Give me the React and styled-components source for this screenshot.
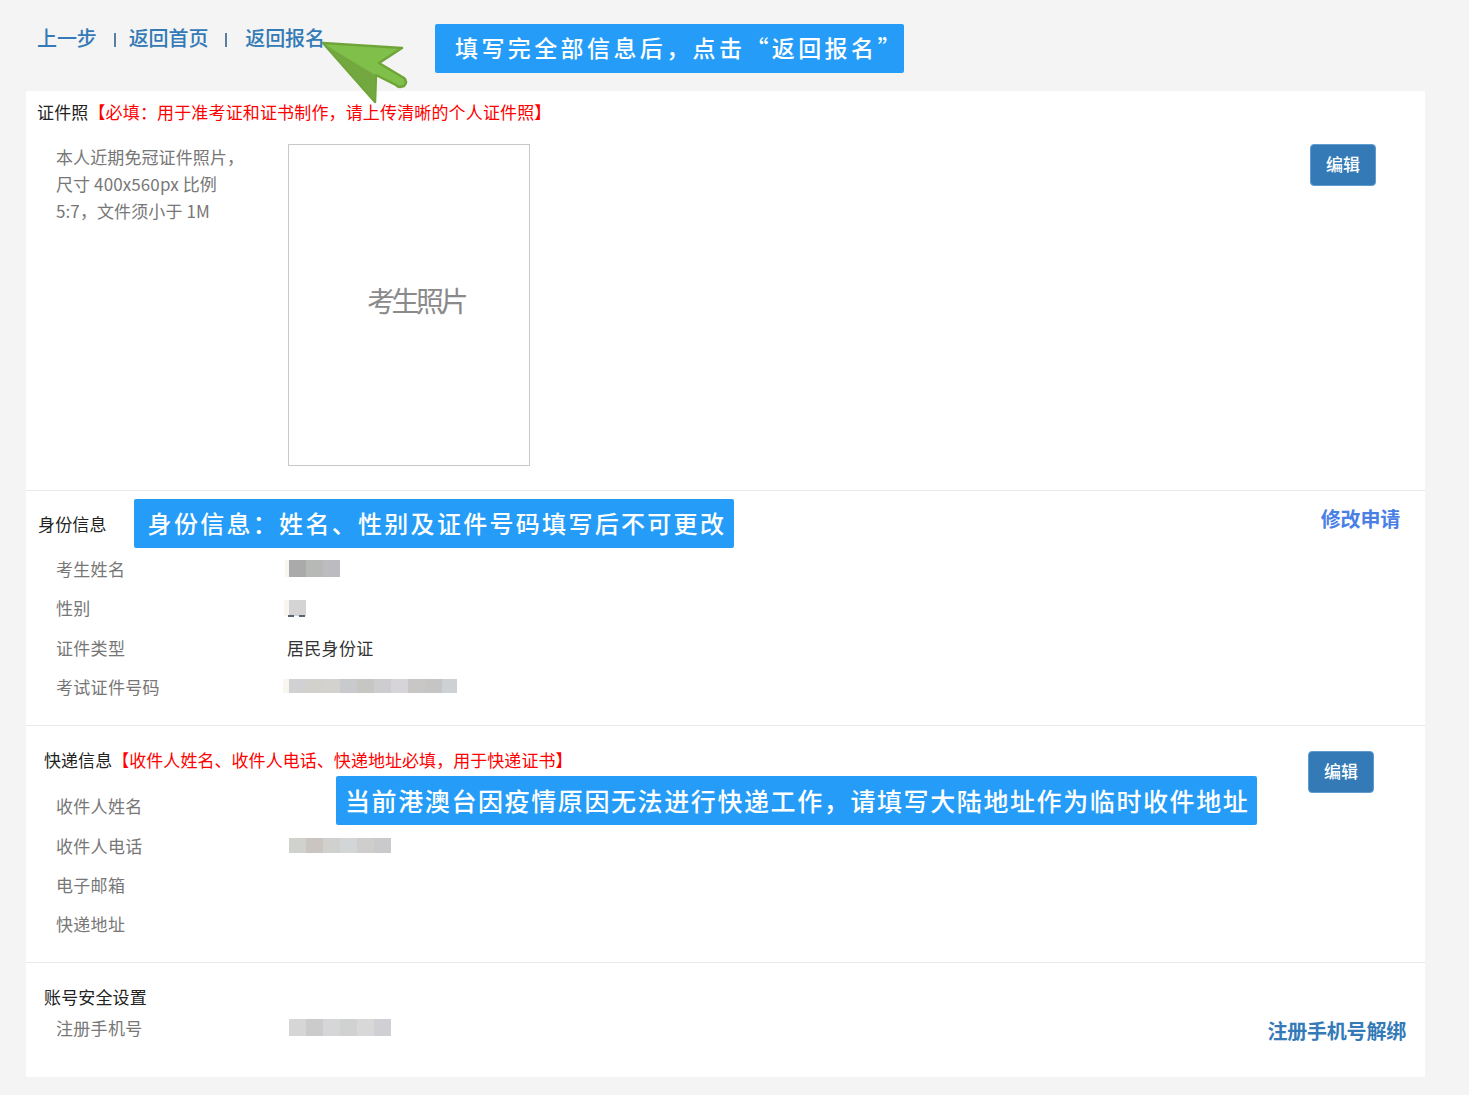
import * as React from "react";
import styled, { createGlobalStyle } from "styled-components";

const GlobalStyle = createGlobalStyle`
  html, body {
    margin: 0;
    padding: 0;
    background: #f4f4f4;
  }
  body {
    font-family: "Noto Sans CJK SC", "Liberation Sans", sans-serif;
    color: #333;
  }
`;

const Page = styled.div`
  position: relative;
  width: 1469px;
  height: 1095px;
  overflow: hidden;
  padding: 0 44px 0 26px;
  box-sizing: border-box;
`;

const TopBar = styled.div`
  height: 91px;
  display: flex;
  align-items: flex-start;
  padding: 24px 0 0 11px;
  box-sizing: border-box;
`;

const Nav = styled.nav`
  display: flex;
  align-items: center;
  height: 28px;
  width: 398px;
  flex: none;
`;

const NavLink = styled.a`
  font-size: 20px;
  font-weight: 500;
  line-height: 28px;
  color: #337ab7;
  letter-spacing: -0.1px;
`;

const NavSep = styled.span`
  width: 2px;
  height: 14px;
  margin: 4px ${(p) => p.$right}px 0 ${(p) => p.$left}px;
  background: #5b7f9c;
`;

const Callout = styled.div`
  background: #259df8;
  color: #fff;
  height: 49px;
  line-height: 47px;
  border-radius: 2px;
  white-space: nowrap;
  box-sizing: border-box;
  font-weight: 500;
  font-size: ${(p) => p.$size}px;
  letter-spacing: ${(p) => p.$spacing}px;
  padding: 0 ${(p) => p.$padRight}px 0 ${(p) => p.$pad}px;
  flex: none;
`;

const SectionCallout = styled(Callout)`
  margin-left: 27px;
`;

const FloatingCallout = styled(Callout)`
  position: absolute;
  left: 310px;
  top: 50px;
  line-height: 49px;
`;

const Arrow = styled.svg`
  position: absolute;
  left: 320px;
  top: 38px;
`;

const Card = styled.main`
  background: #fff;
  height: 986px;
`;

const Section = styled.section`
  position: relative;
  box-sizing: border-box;
  height: ${(p) => p.$height}px;
  border-bottom: ${(p) => (p.$last ? "none" : "1px solid #e8e8e8")};
  padding-top: ${(p) => p.$top}px;
`;

const SectionHead = styled.div`
  display: flex;
  align-items: center;
  height: ${(p) => p.$height}px;
  padding-left: ${(p) => p.$left}px;
  margin-bottom: ${(p) => p.$gap || 0}px;
`;

const Title = styled.h3`
  margin: 0;
  font-size: 17px;
  font-weight: 400;
  color: #222;
  white-space: nowrap;
  letter-spacing: ${(p) => p.$spacing ?? 0.15}px;
`;

const Required = styled.span`
  color: #f00;
`;

const PhotoRow = styled.div`
  display: grid;
  grid-template-columns: 262px 242px 1fr 66px;
  padding: 19px 49px 0 0;
  align-items: start;
`;

const Hint = styled.p`
  margin: -1px 0 0;
  padding-left: 30px;
  font-size: 17px;
  line-height: 27px;
  color: #777;
  white-space: nowrap;
  letter-spacing: 0.1px;
`;

const PhotoBox = styled.div`
  width: 242px;
  height: 322px;
  box-sizing: border-box;
  border: 1px solid #c8c8c8;
  display: flex;
  align-items: center;
  justify-content: center;
  padding: 0 0 11px 14px;
  font-size: 28px;
  letter-spacing: -3.6px;
  color: #8a8a8a;
`;

const EditButton = styled.button`
  width: 66px;
  height: 42px;
  padding: 0 0 3px;
  border: 1px solid #5f9ccf;
  border-radius: 4px;
  background: #337ab7;
  color: #fff;
  font-family: inherit;
  font-size: 17px;
  font-weight: 500;
`;

const FloatingEdit = styled(EditButton)`
  position: absolute;
  left: 1282px;
  top: 25px;
`;

const Row = styled.div`
  display: grid;
  grid-template-columns: 232px 1fr;
  align-items: center;
  height: ${(p) => p.$height || 39.4}px;
  padding-left: 30px;
`;

const Label = styled.span`
  font-size: 17px;
  color: #777;
  letter-spacing: 0.3px;
`;

const Value = styled.span`
  font-size: 17px;
  color: #333;
  letter-spacing: 0.3px;
  margin-left: -1px;
`;

const Blur = styled.div`
  position: relative;
  display: flex;
  height: ${(p) => p.$height}px;
  margin-left: 1px;

  &::before {
    content: "";
    width: ${(p) => p.$lead || 0}px;
    margin-left: -${(p) => p.$lead || 0}px;
    background: #f9f6ef;
  }
`;

const Cell = styled.i`
  display: block;
  width: ${(p) => p.$width}px;
  background: ${(p) => p.$color};
`;

/* bottom edge of the glyph that the blur doesn't quite cover */
const GlyphTail = styled.b`
  position: absolute;
  left: -1px;
  bottom: -1px;
  width: 17px;
  height: 2px;
  background: linear-gradient(90deg, #5a6470 0 35%, transparent 35% 65%, #5a6470 65%);
`;

const SideLink = styled.a`
  position: absolute;
  font-size: 20px;
  font-weight: 700;
  line-height: 28px;
  white-space: nowrap;
  letter-spacing: -0.2px;
  color: ${(p) => p.$color};
  right: ${(p) => p.$right}px;
  top: ${(p) => p.$top}px;
`;

const Pixels = ({ colors, height, lead, lastWidth, tail }) => (
  <Blur $height={height} $lead={lead}>
    {colors.map((c, i) => (
      <Cell key={i} $color={c} $width={lastWidth && i === colors.length - 1 ? lastWidth : 17} />
    ))}
    {tail ? <GlyphTail /> : null}
  </Blur>
);

const ArrowIcon = () => (
  <Arrow width="92" height="68" viewBox="0 0 92 68">
    <path
      d="M3 5 L82 10 L59 25 L84 40 Q88 44 84 48 L80 49 Q78 49 76 47 L56 37 L55 64 Z"
      fill="#80c04a"
      stroke="#6fa538"
      strokeWidth="2.5"
      strokeLinejoin="round"
    />
    <path d="M4 6 L55 37 L55 62 Z" fill="#72a83f" />
  </Arrow>
);

export default function App() {
  return (
    <Page>
      <GlobalStyle />
      <TopBar>
        <Nav>
          <NavLink>上一步</NavLink>
          <NavSep $left={17} $right={13} />
          <NavLink>返回首页</NavLink>
          <NavSep $left={17} $right={18} />
          <NavLink>返回报名</NavLink>
        </Nav>
        <Callout $size={23} $spacing={3.4} $pad={20} $padRight={0}>
          填写完全部信息后，点击“返回报名”
        </Callout>
      </TopBar>
      <ArrowIcon />
      <Card>
        <Section $height={400} $top={6}>
          <SectionHead $height={28} $left={11}>
            <Title>
              证件照<Required>【必填：用于准考证和证书制作，请上传清晰的个人证件照】</Required>
            </Title>
          </SectionHead>
          <PhotoRow>
            <Hint>
              本人近期免冠证件照片，
              <br />
              尺寸 400x560px 比例
              <br />
              5:7，文件须小于 1M
            </Hint>
            <PhotoBox>考生照片</PhotoBox>
            <span />
            <EditButton>编辑</EditButton>
          </PhotoRow>
        </Section>

        <Section $height={235} $top={8}>
          <SectionHead $height={49} $left={12} $gap={0.6}>
            <Title>身份信息</Title>
            <SectionCallout $size={24} $spacing={2.3} $pad={14} $padRight={8}>
              身份信息：姓名、性别及证件号码填写后不可更改
            </SectionCallout>
          </SectionHead>
          <SideLink $color="#4a7fe6" $right={25} $top={14}>
            修改申请
          </SideLink>
          <Row>
            <Label>考生姓名</Label>
            <Pixels height={17} lead={4} colors={["#a9aaa9", "#b7b9b6", "#bcbcc0"]} />
          </Row>
          <Row>
            <Label>性别</Label>
            <Pixels height={16} lead={5} tail colors={["#d4d4d4"]} />
          </Row>
          <Row>
            <Label>证件类型</Label>
            <Value>居民身份证</Value>
          </Row>
          <Row>
            <Label>考试证件号码</Label>
            <Pixels
              height={14}
              lead={6}
              lastWidth={15}
              colors={[
                "#d1d0d3",
                "#d2d1cb",
                "#d3d2ce",
                "#c9cace",
                "#c6c6c3",
                "#cdcdcf",
                "#d6d4d8",
                "#c9c7c5",
                "#c5c5c5",
                "#ced1d3",
              ]}
            />
          </Row>
        </Section>

        <Section $height={237} $top={18}>
          <SectionHead $height={30} $left={18} $gap={12}>
            <Title $spacing={0.05}>
              快递信息<Required>【收件人姓名、收件人电话、快递地址必填，用于快递证书】</Required>
            </Title>
          </SectionHead>
          <FloatingCallout $size={25} $spacing={1.6} $pad={9} $padRight={8}>
            当前港澳台因疫情原因无法进行快递工作，请填写大陆地址作为临时收件地址
          </FloatingCallout>
          <FloatingEdit>编辑</FloatingEdit>
          <Row>
            <Label>收件人姓名</Label>
          </Row>
          <Row>
            <Label>收件人电话</Label>
            <Pixels
              height={15}
              colors={["#d0d2ce", "#cbc5c2", "#d0d0ce", "#d2d6d7", "#d0cecc", "#cacacc"]}
            />
          </Row>
          <Row>
            <Label>电子邮箱</Label>
          </Row>
          <Row>
            <Label>快递地址</Label>
          </Row>
        </Section>

        <Section $height={114} $top={18} $last>
          <SectionHead $height={30} $left={18}>
            <Title>账号安全设置</Title>
          </SectionHead>
          <Row $height={32}>
            <Label>注册手机号</Label>
            <Pixels
              height={17}
              colors={["#d6d6d6", "#cbcbcb", "#d6d6d8", "#d0d2d2", "#d8d8d8", "#d0d0d4"]}
            />
          </Row>
          <SideLink $color="#337ab7" $right={19} $top={54}>
            注册手机号解绑
          </SideLink>
        </Section>
      </Card>
    </Page>
  );
}
